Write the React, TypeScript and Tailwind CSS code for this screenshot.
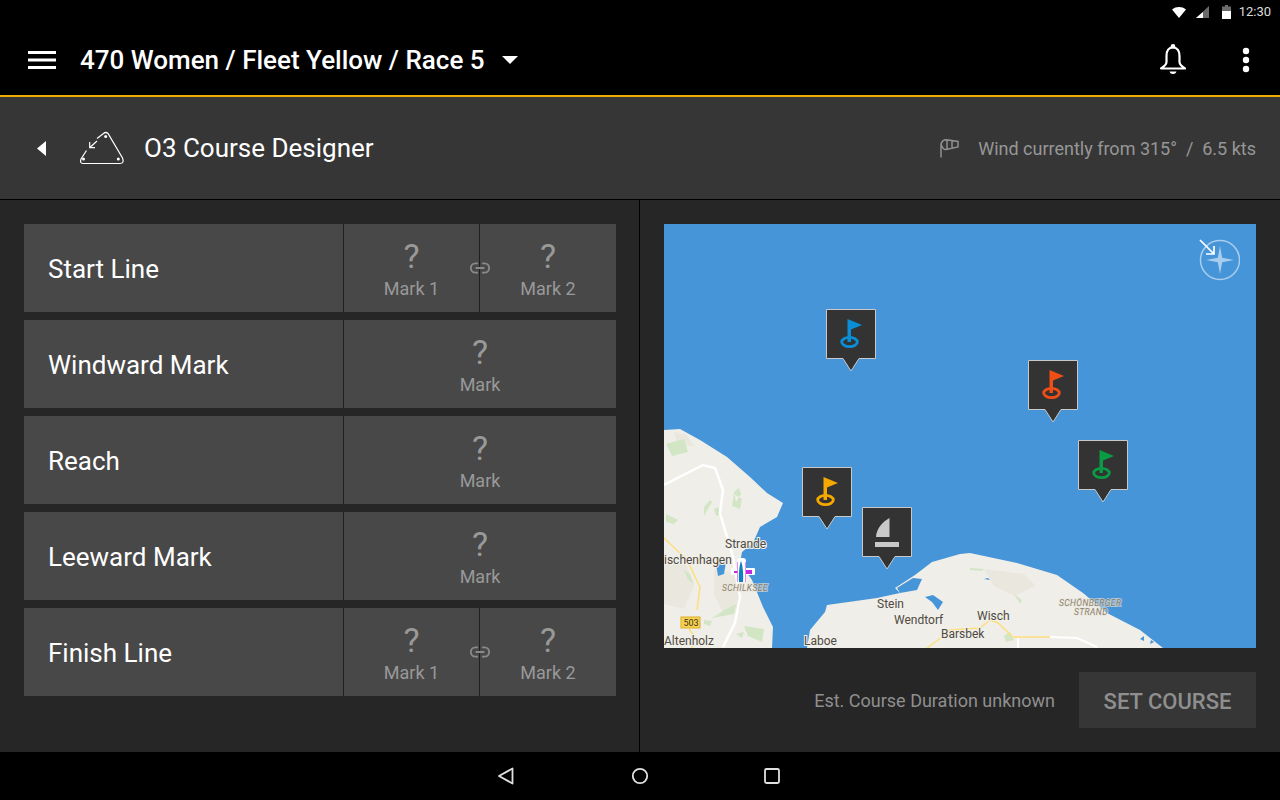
import { Link2 } from "lucide-react";

const Mark = ({ label }: { label: string }) => (
  <div className="flex flex-1 flex-col items-center pt-[13px] text-[#999]">
    <span className="text-[34px] leading-[38px]">?</span>
    <span className="mt-[2px] text-[18px] leading-[24px]">{label}</span>
  </div>
);

const CourseRow = ({ title, double }: { title: string; double?: boolean }) => (
  <div className="flex h-[88px] bg-[#484848]">
    <div className="flex w-[320px] items-center border-r border-[#1f1f1f] pt-[2px] pl-6 text-[26px] text-white">
      {title}
    </div>
    {double ? (
      <div className="relative flex flex-1">
        <div className="flex w-[135px]">
          <Mark label="Mark 1" />
        </div>
        <div className="w-px bg-[#1f1f1f]" />
        <Mark label="Mark 2" />
        <Link2 className="absolute top-[33px] left-[125px] text-[#8a8a8a]" size={22} strokeWidth={2} />
      </div>
    ) : (
      <div className="flex flex-1">
        <Mark label="Mark" />
      </div>
    )}
  </div>
);

const MarkerShell = ({ className, children }: { className: string; children: React.ReactNode }) => (
  <svg className={`absolute ${className}`} width="50" height="63" viewBox="0 0 50 63">
    <path d="M.5.5h49v49H33L25 62 17 49.500H.5z" fill="#333" stroke="#c9c9c9" />
    {children}
  </svg>
);

const FlagMarker = ({ className, color }: { className: string; color: string }) => (
  <MarkerShell className={className}>
    <path d="M21.500 10l14.500 6-11 4.500V33h-3.500z" fill={color} />
    <ellipse cx="23.500" cy="33" rx="7.800" ry="4.700" fill="none" stroke={color} strokeWidth="2.800" />
  </MarkerShell>
);

const MapLabel = ({ x, y, children }: { x: number; y: number; children: string }) => (
  <text
    x={x}
    y={y}
    fontSize="12"
    fill="#4f4a42"
    stroke="#f1efe9"
    strokeWidth="2"
    paintOrder="stroke"
    className="font-['Roboto']"
  >
    {children}
  </text>
);

const ItalicLabel = ({ x, y, children }: { x: number; y: number; children: string }) => (
  <text
    x={x}
    y={y}
    fontSize="8.500"
    fontStyle="italic"
    letterSpacing=".4"
    fill="#8c7f68"
    stroke="#e9e6de"
    strokeOpacity=".6"
    strokeWidth="2"
    paintOrder="stroke"
    className="font-['Roboto']"
  >
    {children}
  </text>
);

const SeaMap = () => (
  <svg className="absolute inset-0" width="592" height="424" viewBox="0 0 592 424">
    <rect width="592" height="424" fill="#4695d8" />
    {/* west shore */}
    <path
      d="M0 206L16 205 36 216 63 233 86 253 103 269 119 279 113 293 96 303 89 319 78 328 76 339 88 356 99 383 109 403 108 424H0z"
      fill="#f0eee8"
    />
    {/* east shore */}
    <path
      d="M143 424L146 406 161 388 163 381 213 374 236 369 231 364 251 351 268 338 296 330 306 329 353 339 393 351 419 369 443 389 476 406 499 424z"
      fill="#f0eee8"
    />
    <path d="M233 364L249 354 258 355 253 366 236 369z" fill="#4695d8" />
    <path d="M261 373L269 371 279 378 274 386 268 378z" fill="#4695d8" />
    {/* urban areas */}
    <path d="M0 335L22 340 30 362 20 385 0 380zM50 345L72 350 76 385 60 392 50 370zM320 345L360 350 372 362 350 372 330 362zM10 208L22 210 30 222 14 222z" fill="#eae7df" />
    {/* parks */}
    <path d="M2 220L20 215 24 228 8 232zM70 270L78 275 76 285 68 282zM40 283L46 276 48 278 40 292zM50 285L54 283 58 290 52 292zM2 290L14 296 10 300 2 298zM72 278L77 270 75 264 70 268zM62 385L72 380 70 390 48 394zM84 412L80 402 100 405 98 418zM40 396L48 397 46 402 40 400zM20 346L26 350 30 360 24 356zM72 410L80 408 78 414zM306 344L320 345 318 347 306 346zM350 370L358 376 356 380zM340 412L346 408 350 416 342 418z" fill="#d2e6c6" />
    {/* roads */}
    <path d="M0 314L23 336 36 363 33 386M25 405L30 412 28 424" fill="none" stroke="#fddf7e" strokeWidth="1.500" />
    <path d="M263 424L278 413 286 406 316 404 326 396 334 399 349 413 386 413" fill="none" stroke="#fddf7e" strokeWidth="1.500" />
    <path d="M0 261L39 241 51 244 59 266 56 289 58 296 69 333 76 373 71 399 59 423" fill="none" stroke="#fff" strokeWidth="2.500" />
    <path d="M386 413L413 414 433 423M354 414V424" fill="none" stroke="#fff" strokeWidth="2" />
    <path d="M52 340L62 338 60 350 54 352zM320 355L324 354 326 356zM476 415L480 412 480 417zM487 416L490 418 486 420z" fill="#4695d8" />
    {/* boat marker */}
    <rect x="73" y="334" width="9" height="24" rx="3" fill="#fff" />
    <rect x="67" y="344" width="24" height="7" rx="1" fill="#fff" />
    <rect x="82" y="346" width="6" height="4" fill="#c22be0" />
    <rect x="70" y="347" width="4" height="2" fill="#c22be0" />
    <path d="M77 337c2 5 2.500 15 2 21h-4c-.5-6 0-16 2-21z" fill="#1080c0" />
    <rect x="73" y="338" width=".8" height="20" fill="#e070f0" />
    <rect x="81" y="338" width=".8" height="20" fill="#e070f0" />
    {/* road shield */}
    <rect x="17" y="393" width="19" height="11" fill="#f8d24e" stroke="#dcae2c" />
    <text x="19.500" y="402" fontSize="9" fill="#3c3420" className="font-['Roboto']">
      503
    </text>
    <MapLabel x={61} y={324}>Strande</MapLabel>
    <MapLabel x={0} y={340}>ischenhagen</MapLabel>
    <MapLabel x={0} y={421}>Altenholz</MapLabel>
    <MapLabel x={140} y={421}>Laboe</MapLabel>
    <MapLabel x={213} y={384}>Stein</MapLabel>
    <MapLabel x={230} y={400}>Wendtorf</MapLabel>
    <MapLabel x={277} y={414}>Barsbek</MapLabel>
    <MapLabel x={313} y={396}>Wisch</MapLabel>
    <ItalicLabel x={58} y={367}>SCHILKSEE</ItalicLabel>
    <ItalicLabel x={395} y={382}>SCHÖNBERGER</ItalicLabel>
    <ItalicLabel x={410} y={391}>STRAND</ItalicLabel>
  </svg>
);

const Compass = () => (
  <svg className="absolute top-[14px] right-[16px]" width="44" height="44" viewBox="0 0 44 44">
    <circle cx="24" cy="22" r="19.500" fill="none" stroke="#a9cdee" strokeWidth="1.500" />
    <path d="M24 8l2.200 11.800L38 22l-11.800 2.200L24 36l-2.200-11.800L10 22l11.800-2.200z" fill="#a9cdee" />
    <path d="M4 2l14 14M18 8v8h-8" fill="none" stroke="#fff" strokeWidth="1.700" />
  </svg>
);

export default function App() {
  return (
    <div className="flex h-[800px] w-[1280px] flex-col bg-black font-['Roboto',sans-serif]">
      {/* status bar */}
      <div className="flex h-6 items-center justify-end pr-[9px] text-[13px] text-[#dcdcdc]">
        <svg width="14" height="11" viewBox="0 0 14 11" className="mr-[10px]">
          <path d="M0 2.500C4-.8 10-.8 14 2.500L7 11z" fill="#fff" />
        </svg>
        <svg width="13" height="12" viewBox="0 0 13 12" className="mr-[13px]">
          <path d="M13 0v12H0z" fill="#6b6b6b" />
          <path d="M7 6v6H0z" fill="#fff" />
        </svg>
        <svg width="9" height="14" viewBox="0 0 9 14" className="mr-[8px]">
          <path d="M3 0h3v1.500h3V14H0V1.500h3z" fill="#6b6b6b" />
          <path d="M0 6h9v8H0z" fill="#fff" />
        </svg>
        <span>12:30</span>
      </div>

      {/* app bar */}
      <div className="flex h-[71px] items-center">
        <svg width="28" height="18" viewBox="0 0 28 18" className="ml-7">
          <path d="M0 0h28v3H0zM0 7.500h28v3H0zM0 15h28v3H0z" fill="#fff" />
        </svg>
        <span className="mt-[2px] ml-6 text-[26px] font-medium text-white">470 Women / Fleet Yellow / Race 5</span>
        <svg width="16" height="8" viewBox="0 0 16 8" className="ml-[17px]">
          <path d="M0 0h16L8 8z" fill="#fff" />
        </svg>
        <svg width="26" height="31" viewBox="0 0 26 31" className="mr-[56px] ml-auto">
          <circle cx="13" cy="2.300" r="2.300" fill="#fff" />
          <path
            d="M13 3.500C8.500 3.500 6.500 7 6.500 12v6c0 3-2.500 4.500-5.500 6.500h24c-3-2-5.500-3.500-5.500-6.500v-6c0-5-2-8.500-6.500-8.500z"
            fill="none"
            stroke="#fff"
            strokeWidth="2.200"
            strokeLinejoin="round"
          />
          <path d="M9.500 27.500h7c-.5 1.700-1.800 2.500-3.500 2.500s-3-.8-3.500-2.500z" fill="#fff" />
        </svg>
        <svg width="8" height="26" viewBox="0 0 8 26" className="mr-[30px]">
          <circle cx="4" cy="4" r="3.200" fill="#fff" />
          <circle cx="4" cy="13" r="3.200" fill="#fff" />
          <circle cx="4" cy="22" r="3.200" fill="#fff" />
        </svg>
      </div>

      {/* sub header */}
      <div className="flex h-[105px] items-center border-t-2 border-b border-t-[#f0ab00] border-b-black bg-[#363636]">
        <svg width="10" height="15" viewBox="0 0 10 15" className="ml-[37px]">
          <path d="M9 0v15L0 7.500z" fill="#fff" />
        </svg>
        <svg width="46" height="34" viewBox="0 0 46 34" className="ml-[32px]">
          <path
            d="M18 7.500L24.500 2.500Q26.700 .5 29 2.500L43.500 27Q45.500 32.500 41 32.500H4Q.5 32.500 2 28L7.500 19.500"
            fill="none"
            stroke="#fff"
            strokeWidth="1.200"
          />
          <circle cx="26.700" cy="5.500" r="1.500" fill="#fff" />
          <circle cx="4.500" cy="28" r="1.500" fill="#fff" />
          <circle cx="39.300" cy="28" r="1.500" fill="#fff" />
          <path d="M18 10L10.700 16.700M10.700 11V16.700H16" fill="none" stroke="#fff" strokeWidth="1.200" />
        </svg>
        <span className="ml-[19px] text-[26px] text-white">O3 Course Designer</span>
        <svg width="20" height="19" viewBox="0 0 20 19" className="mr-[19px] ml-auto">
          <path
            d="M2 18.500V5M2 5C3 2 5 .7 7 .7L19 2.500V8L7 10.500C5 11 3 8 2 5zM8 1v9M13 2v7"
            fill="none"
            stroke="#909090"
            strokeWidth="1.500"
          />
        </svg>
        <span className="mr-6 text-[18px] whitespace-pre text-[#969696]">Wind currently from 315°  /  6.5 kts</span>
      </div>

      {/* body */}
      <div className="flex flex-1 bg-[#262626]">
        <div className="flex w-[640px] flex-col gap-2 border-r border-black pt-6 pr-[23px] pl-6">
          <CourseRow title="Start Line" double />
          <CourseRow title="Windward Mark" />
          <CourseRow title="Reach" />
          <CourseRow title="Leeward Mark" />
          <CourseRow title="Finish Line" double />
        </div>
        <div className="flex flex-1 flex-col px-6 pt-6">
          <div className="relative h-[424px] overflow-hidden">
            <SeaMap />
            <Compass />
            <FlagMarker className="top-[85px] left-[162px]" color="#0a8fd6" />
            <FlagMarker className="top-[136px] left-[364px]" color="#f04e16" />
            <FlagMarker className="top-[216px] left-[414px]" color="#0a9b45" />
            <FlagMarker className="top-[243px] left-[138px]" color="#f5a800" />
            <MarkerShell className="top-[283px] left-[198px]">
              <path d="M27.500 11v19H14c.500-8 6-15 13.500-19zM13 35h24v5H13z" fill="#c9c9c9" />
            </MarkerShell>
          </div>
          <div className="mt-6 flex items-center justify-end">
            <span className="text-[18px] text-[#8f8f8f]">Est. Course Duration unknown</span>
            <div className="ml-6 flex h-14 w-[177px] items-center justify-center bg-[#363636] pt-[2px] text-[22px] font-medium text-[#8f8f8f]">
              SET COURSE
            </div>
          </div>
        </div>
      </div>

      {/* nav bar */}
      <div className="flex h-12 items-center justify-center pr-[2px]">
        <svg width="18" height="18" viewBox="0 0 18 18" className="mr-[116px]">
          <path d="M15.500 1.500v15L2 9z" fill="none" stroke="#e0e0e0" strokeWidth="1.800" strokeLinejoin="round" />
        </svg>
        <svg width="18" height="18" viewBox="0 0 18 18" className="mr-[114px]">
          <circle cx="9" cy="9" r="7.200" fill="none" stroke="#e0e0e0" strokeWidth="1.800" />
        </svg>
        <svg width="18" height="18" viewBox="0 0 18 18">
          <rect x="2" y="2" width="14" height="14" rx="1.500" fill="none" stroke="#e0e0e0" strokeWidth="1.800" />
        </svg>
      </div>
    </div>
  );
}
